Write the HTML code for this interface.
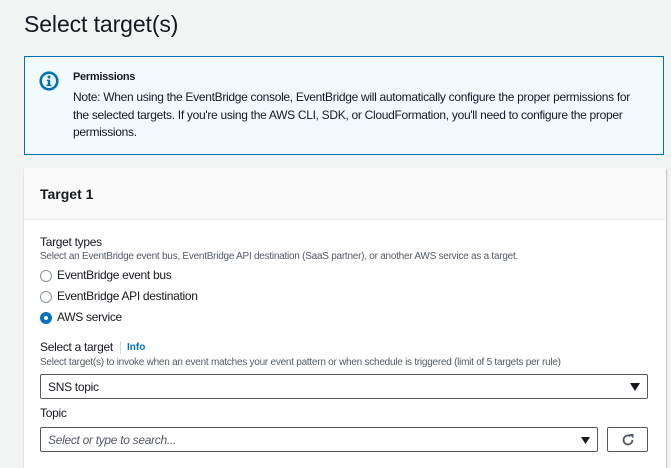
<!DOCTYPE html>
<html><head><meta charset="utf-8"><style>
*{box-sizing:border-box;margin:0;padding:0}
body{width:671px;height:464px;overflow:hidden;background:#f2f3f3;font-family:"Liberation Sans",sans-serif;color:#16191f;position:relative}
.abs{position:absolute;white-space:nowrap}
h1{position:absolute;left:24px;top:11px;font-size:23px;font-weight:400;letter-spacing:-0.1px}
.alert{position:absolute;left:24px;top:56px;width:640px;height:99px;background:#f1faff;border:1px solid #0073bb}
.card{position:absolute;left:24px;top:168px;width:642px;height:300px;background:#fff;box-shadow:0 1px 1px rgba(0,28,36,.3),1px 1px 1px rgba(0,28,36,.15)}
.hdr{position:absolute;left:0;top:0;width:100%;height:52px;background:#fafafa;border-bottom:1px solid #eaeded}
.t12{font-size:12px;letter-spacing:-0.3px}
.t10{font-size:10px;color:#545b64;letter-spacing:-0.25px}
.radio{position:absolute;width:12px;height:12px;border-radius:50%;border:1px solid #879596;background:#fff}
.radio.on{border:4px solid #0073bb}
.box{position:absolute;border:1px solid #545b64;background:#fff;border-radius:2px}
</style></head><body>
<h1>Select target(s)</h1>
<div class="alert">
<svg class="abs" style="left:14px;top:14px" width="20" height="20" viewBox="0 0 20 20"><circle cx="10" cy="10" r="8.3" fill="none" stroke="#0073bb" stroke-width="2.6"/><circle cx="10" cy="6" r="1.5" fill="#0073bb"/><path d="M7.8 8.6h3.4v5h1.3v1.5H7.5v-1.5h1.3V10H7.8z" fill="#0073bb"/></svg>
<div class="abs t12" style="left:48px;top:14px;font-weight:700;font-size:11px">Permissions</div>
<div class="abs t12" style="left:48px;top:32px;line-height:17.5px;white-space:normal;width:580px">Note: When using the EventBridge console, EventBridge will automatically configure the proper permissions for<br>the selected targets. If you're using the AWS CLI, SDK, or CloudFormation, you'll need to configure the proper<br>permissions.</div>
</div>
<div class="card">
<div class="hdr"><div class="abs" style="left:16px;top:18px;font-size:14px;font-weight:700">Target 1</div></div>
<div class="abs t12" style="left:16px;top:67px">Target types</div>
<div class="abs t10" style="left:16px;top:83px">Select an EventBridge event bus, EventBridge API destination (SaaS partner), or another AWS service as a target.</div>
<div class="radio" style="left:16px;top:102px"></div><div class="abs t12" style="left:33px;top:100px">EventBridge event bus</div>
<div class="radio" style="left:16px;top:123px"></div><div class="abs t12" style="left:33px;top:121px">EventBridge API destination</div>
<div class="radio on" style="left:16px;top:144px"></div><div class="abs t12" style="left:33px;top:142px">AWS service</div>
<div class="abs t12" style="left:16px;top:172px">Select a target</div>
<div class="abs" style="left:96px;top:173px;width:1px;height:13px;background:#d5dbdb"></div>
<div class="abs" style="left:103px;top:174px;font-size:10px;font-weight:700;color:#0073bb">Info</div>
<div class="abs t10" style="left:16px;top:189px">Select target(s) to invoke when an event matches your event pattern or when schedule is triggered (limit of 5 targets per rule)</div>
<div class="box" style="left:16px;top:206px;width:608px;height:25px"><div class="abs t12" style="left:7px;top:5px">SNS topic</div>
<svg class="abs" style="left:589px;top:8px" width="10" height="8"><path d="M0 0h10L5 8z" fill="#16191f"/></svg></div>
<div class="abs t12" style="left:16px;top:238px">Topic</div>
<div class="box" style="left:16px;top:259px;width:558px;height:25px"><div class="abs t12" style="left:7px;top:5px;font-style:italic;color:#545b64">Select or type to search...</div>
<svg class="abs" style="left:540px;top:9px" width="9" height="7"><path d="M0 0h9L4.5 7z" fill="#16191f"/></svg></div>
<div class="box" style="left:583px;top:259px;width:41px;height:25px"><svg class="abs" style="left:13px;top:5px" width="14" height="14" viewBox="0 0 14 14"><path d="M11.5 7A4.5 4.5 0 1 1 9.5 3.2" fill="none" stroke="#545b64" stroke-width="1.8"/><path d="M8 1h4.5v4.5z" fill="#545b64"/></svg></div>
</div>
</body></html>
